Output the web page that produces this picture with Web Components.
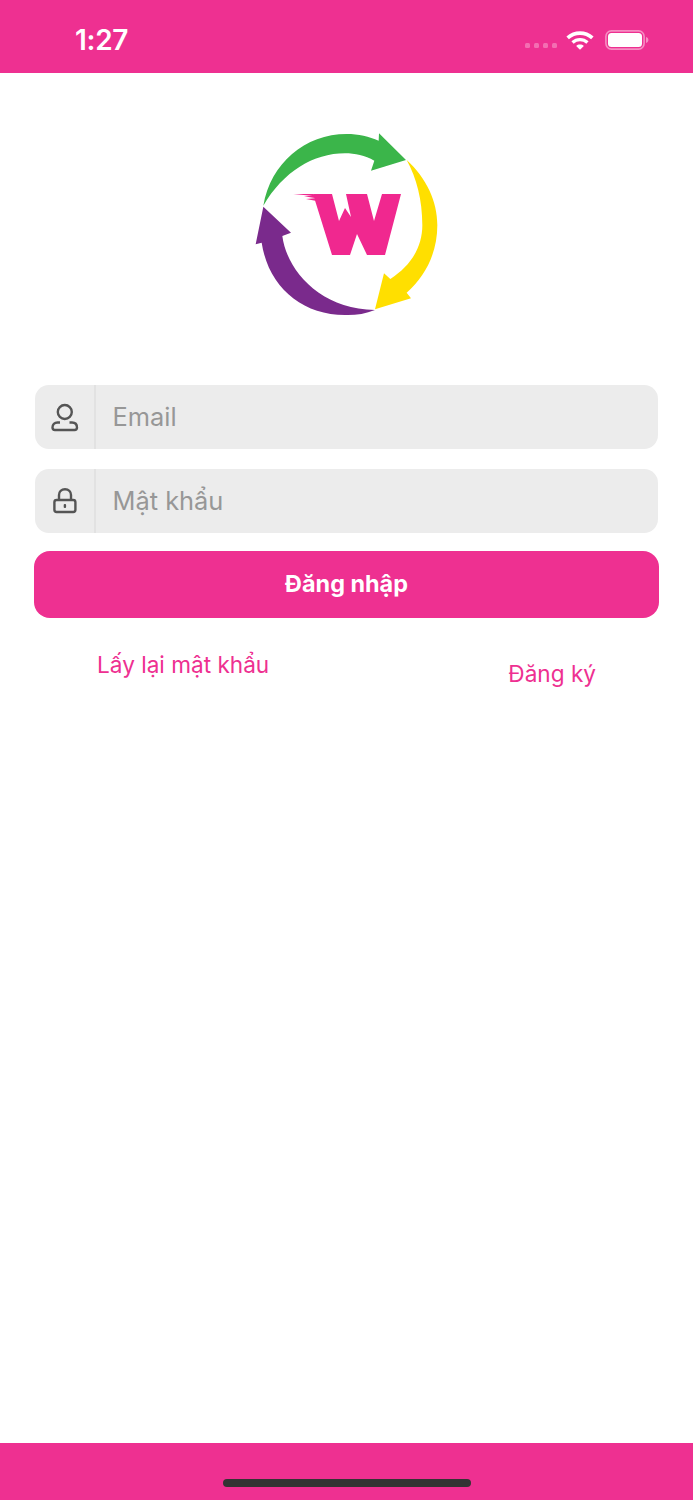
<!DOCTYPE html>
<html lang="vi">
<head>
<meta charset="utf-8">
<title>Đăng nhập</title>
<style>
  html, body { margin: 0; padding: 0; background: #fff; }
  body { font-family: Inter, "Noto Sans", sans-serif; }
</style>
</head>
<body>
<login-screen></login-screen>

<script>
// status bar at the top of the phone
class StatusBar extends HTMLElement {
  constructor() {
    super();
    this.attachShadow({ mode: 'open' });
    this.shadowRoot.innerHTML = `
      <style>
        :host { display: flex; align-items: center; justify-content: space-between; height: 73px; background: #ee3091; color: #fff; box-sizing: border-box; padding: 6px 44px 0 75px; }
        .time { font: 600 28px/1 Inter, sans-serif; letter-spacing: -0.3px; }
        .right { display: flex; align-items: center; }
        .dots { display: flex; gap: 3.5px; margin: 12px 9px 0 0; }
        .dots i { width: 5.5px; height: 5.5px; border-radius: 1.5px; background: rgba(255,255,255,.3); }
        svg { display: block; }
        .wifi { margin-right: 11px; }
      </style>
      <span class="time">1:27</span>
      <div class="right">
        <div class="dots"><i></i><i></i><i></i><i></i></div>
        <svg class="wifi" width="28" height="21" viewBox="0 0 27 20">
          <path d="M0.4 7.2C7.6 .2 19.4 .2 26.6 7.2L24.2 9.8C18.4 4.2 8.6 4.2 2.8 9.8Z" fill="#fff"/>
          <path d="M5.2 11.8C9.8 7.4 17.2 7.4 21.8 11.8L19.6 14.2C16.2 11 10.8 11 7.4 14.2Z" fill="#fff"/>
          <path d="M9.8 16.2C11.8 14.4 15.2 14.4 17.2 16.2L13.5 20Z" fill="#fff"/>
        </svg>
        <svg width="44" height="20" viewBox="0 0 44 20">
          <rect x="0.9" y="0.9" width="38.2" height="18.2" rx="5.5" fill="none" stroke="#fff" stroke-opacity=".45" stroke-width="1.6"/>
          <rect x="3" y="3" width="34" height="14" rx="3.5" fill="#fff"/>
          <path d="M41 7C42.6 7.4 43.4 8.6 43.4 10S42.6 12.6 41 13Z" fill="#fff" fill-opacity=".45"/>
        </svg>
      </div>
    `;
  }
}

class AppLogo extends HTMLElement {
  constructor() {
    super();
    this.attachShadow({ mode: 'open' });
    this.shadowRoot.innerHTML = `
      <style>
        :host { display: block; width: 230px; height: 230px; }
        svg { display: block; }
      </style>
      <svg width="230" height="230" viewBox="0 0 690 690">
        <path fill="#3bb54a" d="M100 287C122 160 225 72 350 72C385 72 418 80 446 92L447 70L528 150L423 182L433 152C405 137 375 130 345 130C250 130 160 185 100 287Z"/>
        <path fill="#ffdf00" d="M530 150C590 205 622 275 622 345C622 430 585 500 530 548L543 565L435 598L462 490L481 507C545 465 577 410 577 345C577 270 560 205 530 150Z"/>
        <path fill="#7a2a8c" d="M435 600C405 612 375 616 345 615C215 615 115 530 95 398L77 403L100 290L183 368L157 378C170 480 270 598 435 600Z"/>
        <path fill="#f0288f" d="M249 252H306L327 333L345 294L363 321L348 252H411L432 333L456 252H513L465 435H411L381 372L360 435H306Z"/>
        <path fill="#f0288f" d="M190 252H250L252 258ZM222 259L252 257L254 264ZM228 267L254 265L256 272Z"/>
      </svg>
    `;
  }
}

class IconField extends HTMLElement {
  constructor() {
    super();
    this.attachShadow({ mode: 'open' });
    const icons = {
      user: `<circle cx="13.8" cy="10" r="7"/><path d="M9 20.5H6.5C3.5 20.5 1.5 22.5 1.5 25.5C1.5 27 2.5 28 4 28H23.5C25 28 26 27 26 25.5C26 22.5 24 20.5 21 20.5H18.5"/>`,
      lock: `<rect x="3.4" y="14" width="21" height="12" rx="2.2"/><path d="M8 14V9C8 5.5 10.5 3.2 14 3.2S20 5.5 20 9V14"/><rect x="12.7" y="18" width="2.4" height="4" rx="1" fill="#555" stroke="none"/>`
    };
    this.shadowRoot.innerHTML = `
      <style>
        :host { display: flex; height: 64px; background: #ececec; border-radius: 14px; overflow: hidden; margin: 0 35px; }
        .icon { flex: none; width: 59px; display: flex; align-items: center; justify-content: center; border-right: 2px solid #e2e2e2; }
        svg { fill: none; stroke: #555; stroke-width: 2.4; display: block; }
        .text { flex: 1; display: flex; align-items: center; padding-left: 16.5px; margin-top: -2px; font: 400 25.4px Inter, sans-serif; color: #979797; }
      </style>
      <div class="icon"><svg width="28" height="30" viewBox="0 0 28 30">${icons[this.getAttribute('icon')]}</svg></div>
      <div class="text"><slot></slot></div>
    `;
  }
}

class LoginButton extends HTMLElement {
  constructor() {
    super();
    this.attachShadow({ mode: 'open' });
    this.shadowRoot.innerHTML = `
      <style>
        :host { display: flex; align-items: center; justify-content: center; height: 67px; margin: 18px 34px 0; padding-bottom: 2px; box-sizing: border-box; background: #ee3091; border-radius: 16px; color: #fff; font: 700 23.4px Inter, sans-serif; }
      </style>
      <slot></slot>
    `;
  }
}

class LoginScreen extends HTMLElement {
  constructor() {
    super();
    this.attachShadow({ mode: 'open' });
    this.shadowRoot.innerHTML = `
      <style>
        :host { display: flex; flex-direction: column; height: 1500px; background: #fff; overflow: hidden; }
        main { flex: 1; display: flex; flex-direction: column; }
        .logo { display: flex; justify-content: center; padding-top: 37px; height: 275px; }
        app-logo { margin-right: 3px; }
        icon-field + icon-field { margin-top: 20px; }
        .links { display: flex; color: #ee3091; font: 400 22.6px/30px Inter, sans-serif; margin-top: 32px; padding: 0 97px; justify-content: space-between; }
        .links span:last-child { margin-top: 9px; }
        footer { flex: none; height: 57px; background: #ee3091; display: flex; justify-content: center; align-items: flex-end; padding-bottom: 13px; box-sizing: border-box; }
        footer i { display: block; width: 248px; height: 8px; border-radius: 4px; background: #333; }
      </style>
      <status-bar></status-bar>
      <main>
        <div class="logo"><app-logo></app-logo></div>
        <icon-field icon="user">Email</icon-field>
        <icon-field icon="lock">Mật khẩu</icon-field>
        <login-button>Đăng nhập</login-button>
        <div class="links"><span>Lấy lại mật khẩu</span><span>Đăng ký</span></div>
      </main>
      <footer><i></i></footer>
    `;
  }
}

customElements.define('status-bar', StatusBar);
customElements.define('app-logo', AppLogo);
customElements.define('icon-field', IconField);
customElements.define('login-button', LoginButton);
customElements.define('login-screen', LoginScreen);
</script>
</body>
</html>
